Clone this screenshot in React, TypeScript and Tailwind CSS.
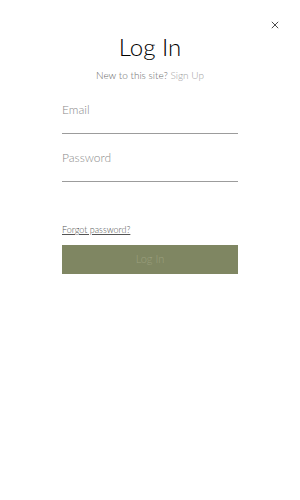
export default function App() {
  return (
    <div className="relative h-[500px] w-[300px] bg-white font-['Lato',sans-serif] font-light text-[#1c1c1c]">
      <button className="absolute right-[21px] top-[20px] flex h-[9px] w-[9px] items-center justify-center text-[#333]">
        <svg viewBox="0 0 10 10" className="h-[8px] w-[8px]" stroke="currentColor" strokeWidth="1.1">
          <path d="M1 1 L9 9 M9 1 L1 9" />
        </svg>
      </button>
      <div className="flex flex-col items-center pt-[32px]">
        <h1 className="text-[24px] leading-[29px] font-light text-black">Log In</h1>
        <p className="mt-[7px] text-[10px] leading-[14px] text-[#6b6b6b]">
          New to this site? <span className="text-[#a0a0a0]">Sign Up</span>
        </p>
      </div>
      <form className="mx-[62px] mt-[20px] flex flex-col">
        <label className="flex flex-col">
          <span className="text-[12px] leading-[16px] text-[#8a8a8a]">Email</span>
          <span className="mt-[15px] h-px bg-[#9c9c9c]" />
        </label>
        <label className="mt-[16px] flex flex-col">
          <span className="text-[12px] leading-[16px] text-[#8a8a8a]">Password</span>
          <span className="mt-[15px] h-px bg-[#9c9c9c]" />
        </label>
        <a className="mt-[42px] self-start text-[9px] leading-[12px] text-[#555] underline">Forgot password?</a>
        <button
          type="button"
          className="mt-[9px] flex h-[29px] items-center justify-center bg-[#7f8662] text-[11px] text-[#9ca07e]"
        >
          Log In
        </button>
      </form>
    </div>
  );
}
